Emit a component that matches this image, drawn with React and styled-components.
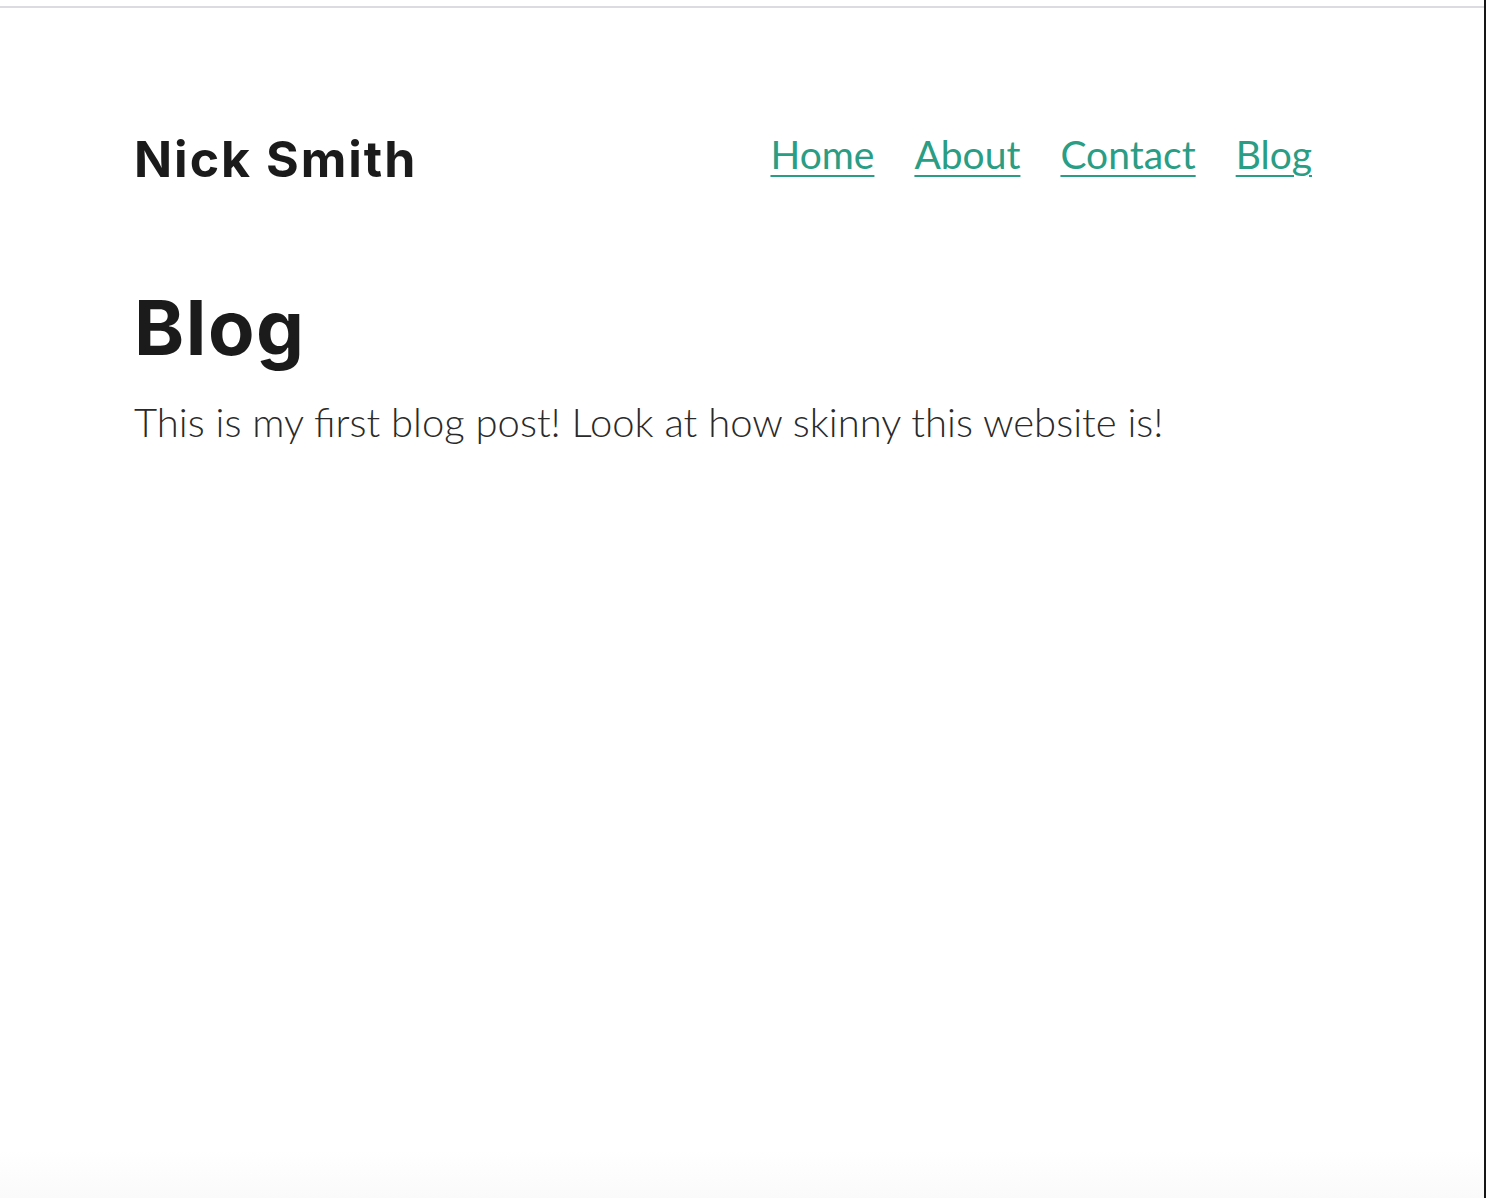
import React from 'react'
import styled, { createGlobalStyle } from 'styled-components'

const GlobalStyle = createGlobalStyle`
  html, body {
    margin: 0;
    padding: 0;
    background: #ffffff;
  }
`

const links = ['Home', 'About', 'Contact', 'Blog']

function App() {
  return (
    <Window>
      <GlobalStyle />
      <Page>
        <Header>
          <SiteName>Nick Smith</SiteName>
          <Nav>
            {links.map((l) => (
              <NavLink key={l} href="#">
                {l}
              </NavLink>
            ))}
          </Nav>
        </Header>
        <Main>
          <Title>Blog</Title>
          <Text>This is my first blog post! Look at how skinny this website is!</Text>
        </Main>
      </Page>
    </Window>
  )
}

const Window = styled.div`
  min-height: 100vh;
  box-sizing: border-box;
  padding-top: 6px;
  border-right: 2px solid #161616;
  background: linear-gradient(to bottom, #ffffff 96%, #fafafa 100%);
`

const Page = styled.div`
  border-top: 2px solid #dcdce0;
  padding: 0 172px 0 134px;
`

const Header = styled.header`
  display: flex;
  justify-content: space-between;
  align-items: center;
  padding-top: 126px;
`

const SiteName = styled.h1`
  margin: 0;
  font-family: Inter, 'Liberation Sans', sans-serif;
  font-size: 50px;
  font-weight: 700;
  letter-spacing: 2px;
  color: #1b1b1b;
  line-height: 1;
`

const Nav = styled.nav`
  display: flex;
  gap: 40px;
  margin-bottom: 10px;
`

const NavLink = styled.a`
  font-family: Lato, 'Open Sans', sans-serif;
  font-size: 39px;
  font-weight: 400;
  color: #2a9d85;
  text-decoration: underline;
  text-decoration-thickness: 2px;
  text-underline-offset: 6px;
  line-height: 1;
`

const Main = styled.main`
  padding-top: 105px;
`

const Title = styled.h2`
  margin: 0;
  font-family: Inter, 'Liberation Sans', sans-serif;
  font-size: 76px;
  font-weight: 700;
  letter-spacing: 1.5px;
  color: #1b1b1b;
  line-height: 1;
`

const Text = styled.p`
  margin: 33px 0 0;
  font-family: Lato, 'Open Sans', sans-serif;
  font-size: 40px;
  font-weight: 300;
  color: #2a2a2a;
  line-height: 1.2;
`

export default App
